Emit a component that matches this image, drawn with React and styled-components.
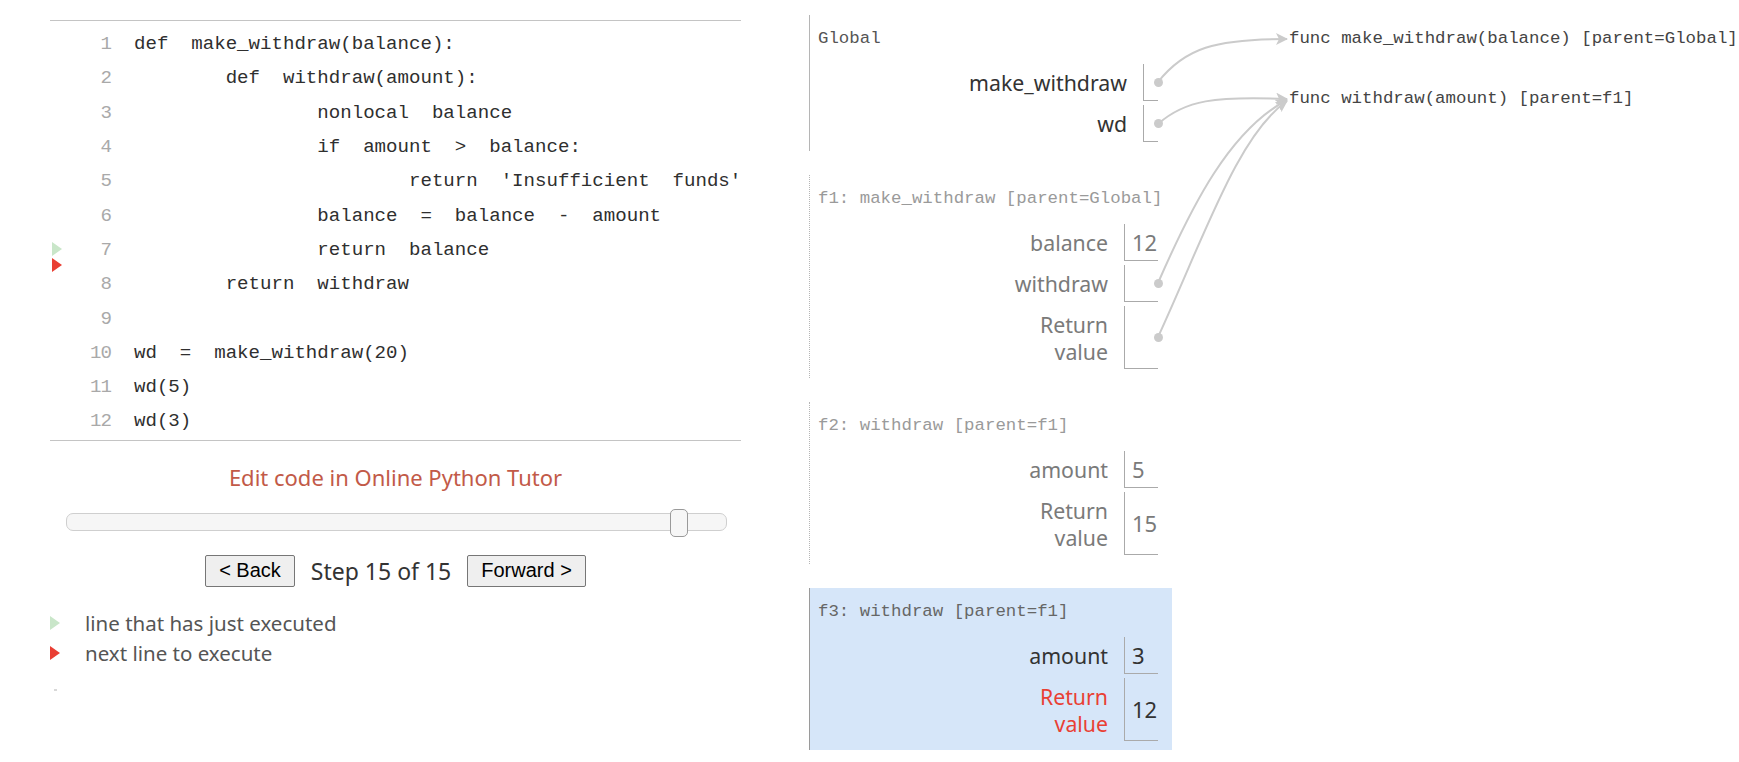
import React from "react";
import styled, { createGlobalStyle } from "styled-components";

const GlobalStyle = createGlobalStyle`
  html, body {
    margin: 0;
    padding: 0;
    background: #fff;
  }
  body {
    font-family: "Noto Sans", sans-serif;
  }
`;

const Page = styled.div`
  position: relative;
  display: flex;
  align-items: flex-start;
  width: 1739px;
  height: 762px;
  overflow: hidden;
`;

/* ---------- left: code + controls ---------- */

const LeftPane = styled.div`
  width: 691px;
  margin: 20px 0 0 50px;
  display: flex;
  flex-direction: column;
`;

const CodePanel = styled.div`
  border-top: 1px solid #c4c4c4;
  border-bottom: 1px solid #c4c4c4;
  padding: 6px 0 1px;
  font-family: "Liberation Mono", monospace;
  font-size: 19.1px;
`;

const CodeRow = styled.div`
  display: grid;
  grid-template-columns: 37px 24px 1fr;
  height: 34.3px;
  align-items: center;
`;

const Gutter = styled.div`
  position: relative;
  height: 100%;
`;

const Marker = styled.span`
  display: block;
  flex: none;
  width: 0;
  height: 0;
  border-left: 10px solid ${(p) => (p.$next ? "#e93f34" : "#c9e6c9")};
  border-top: 7px solid transparent;
  border-bottom: 7px solid transparent;
`;

const GutterMarker = styled(Marker)`
  position: absolute;
  left: 2px;
  top: ${(p) => p.$top}px;
`;

const LineNo = styled.span`
  color: #a9a9a9;
  text-align: right;
  letter-spacing: -1px;
`;

const CodeText = styled.span`
  padding-left: 23px;
  color: #2f2f2f;
  white-space: pre;
`;

const EditLink = styled.a`
  margin-top: 21px;
  text-align: center;
  font-size: 22px;
  line-height: 30px;
  color: #c25a48;
  text-decoration: none;
`;

const Slider = styled.div`
  position: relative;
  margin: 21px 14px 0 16px;
  height: 16px;
  border: 1px solid #cfcfcf;
  border-radius: 7px;
  background: #f6f6f6;
`;

const SliderHandle = styled.span`
  position: absolute;
  left: 603px;
  top: -5px;
  width: 16px;
  height: 26px;
  border: 1px solid #9a9a9a;
  border-radius: 5px;
  background: #f6f6f6;
`;

const NavRow = styled.div`
  margin-top: 24px;
  display: flex;
  justify-content: center;
  align-items: center;
  gap: 16px;
`;

const NavButton = styled.button`
  height: 32px;
  padding: 0 13px;
  font-family: "Liberation Sans", Arial, sans-serif;
  font-size: 20px;
  color: #000;
  background: #efefef;
  border: 1px solid #767676;
  border-radius: 2px;
`;

const StepText = styled.span`
  font-size: 23px;
  color: #333;
`;

const Legend = styled.div`
  margin-top: 21px;
  display: flex;
  flex-direction: column;
`;

const LegendRow = styled.div`
  display: flex;
  align-items: center;
  gap: 25px;
  height: 30px;
  font-size: 20.5px;
  color: #555;
`;

const Crumb = styled.span`
  margin: 21px 0 0 4px;
  width: 3px;
  height: 2px;
  background: #d8d8d8;
`;

/* ---------- right: frames + heap ---------- */

const VizPane = styled.div`
  margin-left: 68px;
  display: flex;
  align-items: flex-start;
`;

const Stack = styled.div`
  width: 363px;
  padding-top: 15px;
  display: flex;
  flex-direction: column;
  gap: 24px;
`;

const Frame = styled.div`
  border-left: 1px ${(p) => (p.$dotted ? "dotted" : "solid")}
    ${(p) => (p.$active ? "#9a9a9a" : "#b5b5b5")};
  background: ${(p) => (p.$active ? "#d6e6f9" : "transparent")};
  padding: 12px 14px 9px 8px;
`;

const FrameTitle = styled.div`
  font-family: "Liberation Mono", monospace;
  font-size: 17.4px;
  line-height: 24px;
  color: ${(p) => p.$color};
  white-space: nowrap;
`;

const VarGrid = styled.div`
  margin-top: 13px;
  display: grid;
  grid-template-columns: auto auto;
  justify-content: end;
  row-gap: 4px;
  column-gap: 16px;
`;

const VarName = styled.div`
  align-self: center;
  text-align: right;
  font-size: 21.3px;
  line-height: 27px;
  color: ${(p) => p.$color};
`;

const VarCell = styled.div`
  box-sizing: border-box;
  width: ${(p) => p.$w}px;
  height: ${(p) => (p.$tall ? 63 : 37)}px;
  border-left: 1px solid #aaa;
  border-bottom: 1px solid #aaa;
  display: flex;
  align-items: center;
  justify-content: ${(p) => (p.$pointer ? "flex-end" : "flex-start")};
  padding-left: 7px;
  font-size: 22px;
  color: ${(p) => p.$color};
`;

const Dot = styled.span`
  width: 9px;
  height: 9px;
  border-radius: 50%;
  background: #cbcbcb;
  margin-right: -4.5px;
`;

const Heap = styled.div`
  margin-left: 117px;
  padding-top: 27px;
  display: flex;
  flex-direction: column;
  gap: 36px;
`;

const HeapFunc = styled.div`
  font-family: "Liberation Mono", monospace;
  font-size: 17.4px;
  line-height: 24px;
  color: #444;
  white-space: nowrap;
`;

const Arrows = styled.svg`
  position: absolute;
  left: 0;
  top: 0;
  pointer-events: none;
`;

const code = [
  "def  make_withdraw(balance):",
  "        def  withdraw(amount):",
  "                nonlocal  balance",
  "                if  amount  >  balance:",
  "                        return  'Insufficient  funds'",
  "                balance  =  balance  -  amount",
  "                return  balance",
  "        return  withdraw",
  "",
  "wd  =  make_withdraw(20)",
  "wd(5)",
  "wd(3)",
];

const frames = [
  {
    title: "Global",
    titleColor: "#555",
    labelColor: "#333",
    vars: [
      { name: "make_withdraw", pointer: true, w: 15 },
      { name: "wd", pointer: true, w: 15 },
    ],
  },
  {
    title: "f1: make_withdraw [parent=Global]",
    dotted: true,
    titleColor: "#9a9a9a",
    labelColor: "#7a7a7a",
    vars: [
      { name: "balance", value: "12", w: 34 },
      { name: "withdraw", pointer: true, w: 34 },
      { name: "Return value", pointer: true, w: 34, tall: true },
    ],
  },
  {
    title: "f2: withdraw [parent=f1]",
    dotted: true,
    titleColor: "#9a9a9a",
    labelColor: "#7a7a7a",
    vars: [
      { name: "amount", value: "5", w: 34 },
      { name: "Return value", value: "15", w: 34, tall: true },
    ],
  },
  {
    title: "f3: withdraw [parent=f1]",
    active: true,
    titleColor: "#666",
    labelColor: "#333",
    retColor: "#e93f34",
    vars: [
      { name: "amount", value: "3", w: 34 },
      { name: "Return value", value: "12", w: 34, tall: true },
    ],
  },
];

const splitLabel = (name) =>
  name === "Return value" ? (
    <>
      Return
      <br />
      value
    </>
  ) : (
    name
  );

export default function App() {
  return (
    <>
      <GlobalStyle />
      <Page>
        <LeftPane>
          <CodePanel>
            {code.map((line, i) => (
              <CodeRow key={i}>
                <Gutter>
                  {i === 6 && (
                    <>
                      <GutterMarker $top={9} />
                      <GutterMarker $top={25} $next />
                    </>
                  )}
                </Gutter>
                <LineNo>{i + 1}</LineNo>
                <CodeText>{line}</CodeText>
              </CodeRow>
            ))}
          </CodePanel>

          <EditLink href="#">Edit code in Online Python Tutor</EditLink>

          <Slider>
            <SliderHandle />
          </Slider>

          <NavRow>
            <NavButton>&lt; Back</NavButton>
            <StepText>Step 15 of 15</StepText>
            <NavButton>Forward &gt;</NavButton>
          </NavRow>

          <Legend>
            <LegendRow>
              <Marker />
              line that has just executed
            </LegendRow>
            <LegendRow>
              <Marker $next />
              next line to execute
            </LegendRow>
          </Legend>
          <Crumb />
        </LeftPane>

        <VizPane>
          <Stack>
            {frames.map((f) => (
              <Frame key={f.title} $dotted={f.dotted} $active={f.active}>
                <FrameTitle $color={f.titleColor}>{f.title}</FrameTitle>
                <VarGrid>
                  {f.vars.map((v) => {
                    const isRet = v.name === "Return value";
                    const color = isRet && f.retColor ? f.retColor : f.labelColor;
                    return (
                      <React.Fragment key={v.name}>
                        <VarName $color={color}>{splitLabel(v.name)}</VarName>
                        <VarCell
                          $w={v.w}
                          $tall={v.tall}
                          $pointer={v.pointer}
                          $color={f.labelColor}
                        >
                          {v.pointer ? <Dot /> : v.value}
                        </VarCell>
                      </React.Fragment>
                    );
                  })}
                </VarGrid>
              </Frame>
            ))}
          </Stack>

          <Heap>
            <HeapFunc>func make_withdraw(balance) [parent=Global]</HeapFunc>
            <HeapFunc>func withdraw(amount) [parent=f1]</HeapFunc>
          </Heap>
        </VizPane>

        <Arrows width="1739" height="762" viewBox="0 0 1739 762">
          <defs>
            <marker
              id="head"
              viewBox="0 0 12 12"
              refX="11"
              refY="6"
              markerWidth="12"
              markerHeight="12"
              markerUnits="userSpaceOnUse"
              orient="auto"
            >
              <path d="M0,0 L12,6 L0,12 L3,6 z" fill="#cbcbcb" />
            </marker>
          </defs>
          <g fill="none" stroke="#cbcbcb" strokeWidth="2">
            <path d="M1158,82 C1185,48 1215,39 1287,39" markerEnd="url(#head)" />
            <path d="M1158,124 C1185,100 1215,96 1287,99" markerEnd="url(#head)" />
            <path d="M1158,283 C1192,205 1230,130 1287,100" markerEnd="url(#head)" />
            <path d="M1158,337 C1205,235 1238,135 1287,101" markerEnd="url(#head)" />
          </g>
        </Arrows>
      </Page>
    </>
  );
}
